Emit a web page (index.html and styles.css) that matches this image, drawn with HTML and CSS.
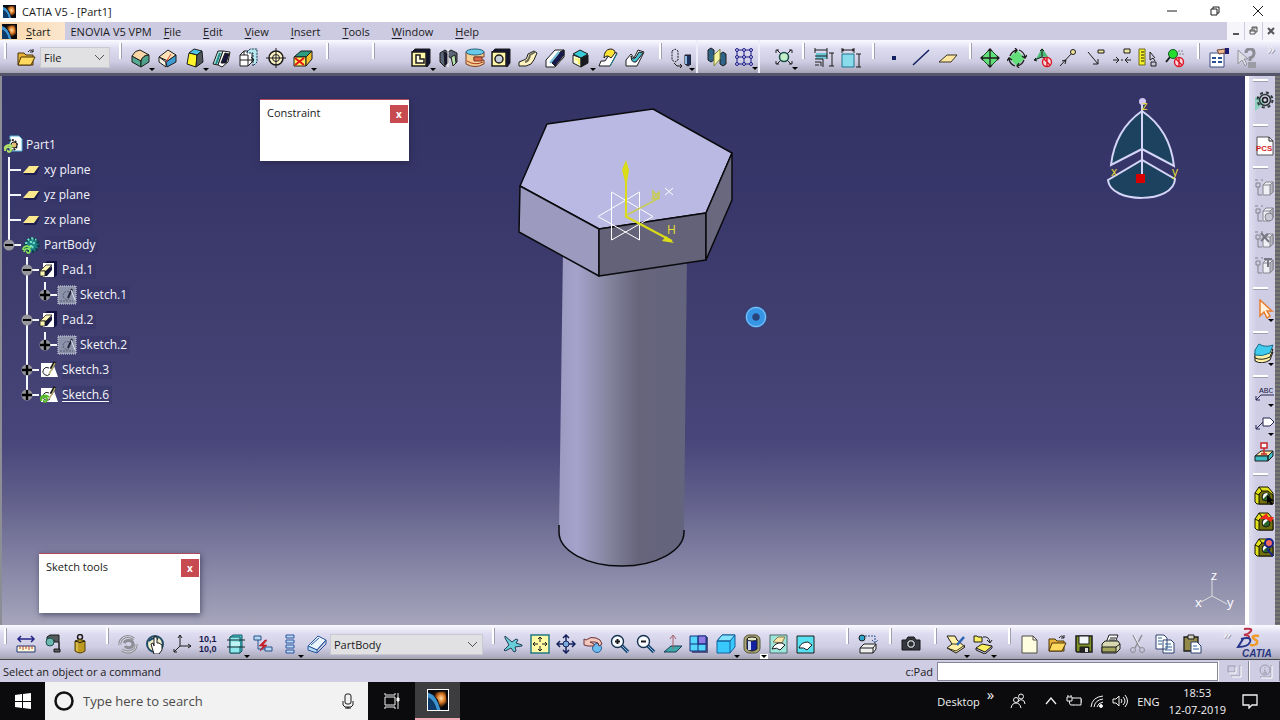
FILE: index.html
```html
<!DOCTYPE html>
<html lang="en">
<head>
<meta charset="utf-8">
<title>CATIA V5 - [Part1]</title>
<link rel="stylesheet" href="styles.css">
</head>
<body>
<svg class="defs" aria-hidden="true">
  <defs>
    <radialGradient id="flare" cx=".62" cy=".4" r=".5"><stop offset="0" stop-color="#ffe0a8"/><stop offset=".5" stop-color="#d97824"/><stop offset="1" stop-color="#1a0c05"/></radialGradient>
  </defs>
  <symbol id="app" viewBox="0 0 16 16"><path fill="#060810" stroke="none" d="M0 0h16v16H0z"/><path fill="url(#flare)" stroke="none" d="M3 2l11-1 1 9-5 5-2-7z"/><path fill="#3d93d0" stroke="none" d="M0 2q7 2 10 14H7Q5 8 0 6z"/><path fill="#0d3a68" stroke="none" d="M0 6q5 2 7 10H0z"/></symbol>
  <symbol id="plane" viewBox="0 0 20 20"><path fill="#1c1c50" stroke="none" d="M3 14L8 7h11l-4 8H3z"/><path fill="#fbe88c" stroke="none" d="M2 13l6-7h10l-5 7z"/></symbol>
  <symbol id="minus" viewBox="0 0 12 12"><circle cx="6" cy="6" r="5.5" fill="#96969c" stroke="none"/><path stroke="#000" stroke-width="2" d="M2 6h8"/></symbol>
  <symbol id="plus" viewBox="0 0 12 12"><circle cx="6" cy="6" r="5.5" fill="#96969c" stroke="none"/><path stroke="#000" stroke-width="2.4" d="M1 6h10M6 1v10"/></symbol>
  <symbol id="pad" viewBox="0 0 20 20"><path fill="#121245" stroke="none" d="M5 4l3-3h10v14l-3 3z"/><path fill="#fff" stroke="none" d="M4 3h11v14H4z"/><path fill="#15153b" stroke="none" d="M6 16v-5l7-5v4l-5 6z"/><path fill="#fbf3b0" stroke="#222" stroke-width=".8" d="M1 11l6-6h6l-6 6z"/><path fill="#fbf3b0" stroke="#222" stroke-width=".8" d="M1 11h5v5H1z"/></symbol>
  <symbol id="sk" viewBox="0 0 20 20"><path fill="#fff" stroke="none" d="M2 3h12l5 14H2z"/><path stroke="#222" d="M10 8a4 4 0 1 0 1 6"/><path stroke="#111" stroke-width="3" d="M16 2l-4 7"/><path stroke="#b7ad71" stroke-width="1.5" d="M16 3l-3 6-3 5"/></symbol>
  <symbol id="skg" viewBox="0 0 20 20"><rect x="1" y="1" width="18" height="18" fill="#8d92ab" stroke="#d7dae8" stroke-dasharray="1 1"/><path stroke="#555a70" stroke-dasharray="2 1" d="M3 16h13M12 7a4 4 0 1 0 0 7"/><path stroke="#232638" stroke-width="2" d="M15 4l-4 9"/><path stroke="#e1e4ef" d="M14 5l4 10"/></symbol>
  <symbol id="gear" viewBox="0 0 20 20"><circle cx="11" cy="10" r="6.5" fill="#1d7f82" stroke="#0d4046" stroke-width="3" stroke-dasharray="2 2"/><path stroke="#6fe0c8" stroke-width="2.2" stroke-dasharray="2 2" d="M5 9a6 6 0 0 1 10-4M7 14a6 6 0 0 0 5-9M10 6v8"/><path stroke="#83e35a" stroke-width="1.7" d="M3 17c1-5 6-4 6-1s-4 2-3 0M10 13c-4-4-8-1-8 2"/></symbol>
  <symbol id="part" viewBox="0 0 20 20"><path fill="#fff" stroke="#54b6d8" d="M7 1h9l3 3v12H7z"/><path stroke="#262626" stroke-width="2" stroke-dasharray="2 1" d="M6 6a5 5 0 1 1 2 9"/><circle cx="11" cy="10" r="3" fill="#e6bd78"/><path stroke="#aee06b" stroke-width="2" d="M2 16c0-6 7-4 6-1s-4 2-3 0M10 12c-4-4-9-1-8 2"/></symbol>
  <symbol id="box" viewBox="0 0 20 20"><path fill="#efeff5" stroke="#85858f" d="M9 7l3-3h7v10l-3 3H9z"/><path fill="#b5b5be" stroke="#85858f" d="M16 7l3-3v10l-3 3z"/><path stroke="#83838d" d="M9 7h7M2 5h4v4H2zM4 9v8h4M1 2h3M7 2h2"/></symbol>
  <symbol id="nut" viewBox="0 0 20 20"><path fill="#e1e11d" stroke="#141400" d="M1 17V8l4-6h9l5 6v11H3z"/><path fill="#70700f" stroke="#141400" d="M5 19V9l3-3h6l5 4v9z"/><path stroke="#141400" d="M5 2l3 4M1 8l4 2"/><circle cx="12" cy="12" r="4" fill="#256527"/><path fill="#fff" stroke="none" d="M9 14l5-5-1-1q-5 0-4 6z"/></symbol>
  <symbol id="folder" viewBox="0 0 20 20"><path fill="#e8b33b" stroke="#4b3507" d="M2 17V5h6l2 2h7v10z"/><path fill="#ffd95d" stroke="#4b3507" d="M2 17l3-8h14l-4 8z"/><path stroke="#222" d="M12 4q3-4 5 0m0-3v3h-3"/></symbol>
  <symbol id="no" viewBox="0 0 20 20"><circle cx="14" cy="14" r="4.5" fill="#f6d8e0" stroke="#dc1826" stroke-width="1.4"/><path stroke="#dc1826" stroke-width="1.4" d="M11 11l6 6M14 10v8"/></symbol>
  <symbol id="loupe" viewBox="0 0 20 20"><path stroke="#1c4770" stroke-width="3.5" d="M11 11l7 7"/><path stroke="#84b8e4" d="M11 11l7 7"/><circle cx="7.500" cy="7.500" r="6" fill="#f7fbff" stroke="#17324f" stroke-width="1.400"/></symbol>
</svg>

<header class="titlebar">
  <svg class="app-icon"><use href="#app"/></svg>
  <h1>CATIA V5 - [Part1]</h1>
  <div class="window-buttons">
    <button aria-label="Minimize"><svg class="i s10" viewBox="0 0 10 10"><path d="M0 5h10"/></svg></button>
    <button aria-label="Restore"><svg class="i s10" viewBox="0 0 10 10"><path d="M1 3h6v6H1zM3 3V1h6v6H7"/></svg></button>
    <button aria-label="Close"><svg class="i s10" viewBox="0 0 10 10"><path d="M0 0l10 10M10 0L0 10"/></svg></button>
  </div>
</header>

<nav class="menubar">
  <button class="start"><svg class="menu-app"><use href="#app"/></svg><span><u>S</u>tart</span></button>
  <button class="enovia">ENOVIA V5 VPM</button>
  <button><u>F</u>ile</button>
  <button><u>E</u>dit</button>
  <button><u>V</u>iew</button>
  <button><u>I</u>nsert</button>
  <button><u>T</u>ools</button>
  <button><u>W</u>indow</button>
  <button><u>H</u>elp</button>
  <div class="doc-buttons">
    <button aria-label="Minimize document"><svg class="i s10" viewBox="0 0 10 10"><path stroke-width="2" d="M2 8h6"/></svg></button>
    <button aria-label="Restore document"><svg class="i s10" viewBox="0 0 10 10"><path d="M1 4h5v4H1zM1 5h5M3 4V1h5v5H6M3 2h5"/></svg></button>
    <button aria-label="Close document"><svg class="i s10" viewBox="0 0 10 10"><path stroke-width="2" d="M1 2l6 6M7 2L1 8"/></svg></button>
  </div>
</nav>

<div class="toolbar top" role="toolbar" aria-label="Part design">
  <div class="group">
    <button aria-label="Open catalog"><svg class="i" viewBox="0 0 20 20"><use href="#folder"/></svg></button>
    <select class="combo" aria-label="Catalog"><option>File</option></select>
  </div>
  <div class="group">
    <button class="more" aria-label="Edge fillet"><svg class="i" viewBox="0 0 20 20"><path fill="#56a892" d="M1 8l9 5v6l-9-5z"/><path fill="#f8d5a5" d="M1 8q3-6 8-6l9 5q-6 0-8 6z"/><path fill="#4fa08a" d="M10 13q2-6 8-6v7l-8 5z"/></svg></button>
    <button aria-label="Chamfer"><svg class="i" viewBox="0 0 20 20"><path fill="#fce0b6" d="M1 9l9-7 8 5-8 6z"/><path fill="#f5efe0" d="M1 9l7 5v5l-7-5z"/><path fill="#3f9cd2" d="M8 14l10-7v7l-9 5z"/><path stroke="#e04838" d="M8 14l5-8"/></svg></button>
    <button class="more" aria-label="Draft angle"><svg class="i" viewBox="0 0 20 20"><path fill="#4ec3e6" d="M4 5l5-4 8 2-5 4z"/><path fill="#fff32a" d="M4 5l8 2-1 12-9-3z"/><path fill="#51565a" d="M12 7l5-4 1 11-7 5z"/></svg></button>
    <button aria-label="Shell"><svg class="i" viewBox="0 0 20 20"><path fill="#b9e5dc" d="M1 16L6 3h5L6 17z"/><path fill="#fff" d="M6 17L11 3l7 1-2 10-6 5z"/><path fill="#15153c" d="M9 15l4-10 4 1-3 9z"/><path stroke="#1b8a88" stroke-width="2" d="M4 16L8 5"/></svg></button>
    <button aria-label="Thickness"><svg class="i" viewBox="0 0 20 20"><path fill="#fff" d="M1 7l4-4h8v11l-4 4H1z"/><path fill="#b6e8ed" stroke="#17324c" stroke-dasharray="2 1" d="M8 4l3-3h7v13l-4 4V5H8z"/><path d="M1 7h8v11M5 3v4M1 12h14m-3-3l3 3-3 3"/></svg></button>
    <button aria-label="Thread"><svg class="i" viewBox="0 0 20 20"><circle cx="10" cy="10" r="7" fill="#fff6c8" stroke-width="1.500"/><circle cx="10" cy="10" r="3.500"/><path d="M10 0v20M0 10h20"/></svg></button>
    <button class="more" aria-label="Remove face"><svg class="i" viewBox="0 0 20 20"><path fill="#2c9c80" d="M1 9l7-6h11l-6 6z"/><path fill="#fff05a" d="M1 9h12v9H1z"/><path fill="#efbf2c" d="M13 9l6-6v8l-6 7z"/><path stroke="#e51717" stroke-width="2" d="M2 10l9 7M11 10l-9 7"/></svg></button>
  </div>
  <div class="group"></div>
  <div class="group long">
    <button class="more" aria-label="Pad"><svg class="i" viewBox="0 0 20 20"><path fill="#121232" d="M1 4l3-3h15v14l-3 4z"/><path fill="#fff6a8" stroke-width="1.500" d="M1 4h14v14H1z"/><path fill="#fffce0" stroke-width="1.500" d="M5 7h4v4h4v4H5z"/></svg></button>
    <button aria-label="Pocket"><svg class="i" viewBox="0 0 20 20"><path fill="#5a6577" d="M2 14V5l5-3 3 2 3-2 6 3v9l-3 3-2-6-4-3-3 4v7z"/><path fill="#161630" d="M6 4l4 2v9l-3 2z"/><path fill="#b7e2ad" d="M13 9l4-2 1 8-3 3z"/><path stroke="#fff" d="M10 1v18"/></svg></button>
    <button aria-label="Shaft"><svg class="i" viewBox="0 0 20 20"><path fill="#f6cf94" stroke="#7a3c28" d="M1 4v12q9 5 18 0v-4H9V9h10V4z"/><ellipse cx="10" cy="4" rx="9" ry="3" fill="#66cae8" stroke="#2a5f7c"/><path fill="#df674b" stroke="#7a3c28" d="M9 9h8v4H9z"/><path stroke="#b03820" d="M2 13q8 5 16 1"/></svg></button>
    <button aria-label="Hole"><svg class="i" viewBox="0 0 20 20"><path fill="#121232" d="M1 4l3-3h15v14l-3 4z"/><path fill="#fff6a8" stroke-width="1.500" d="M1 4h14v14H1z"/><circle cx="8" cy="11" r="4" fill="#c9cfda" stroke-width="1.500"/></svg></button>
    <button aria-label="Rib"><svg class="i" viewBox="0 0 20 20"><path fill="#fff4c0" d="M1 18v-4l5-2q3 0 4-6l6-3 3 2q-3 8-6 11l-5 2z"/><path stroke="#6b6b56" stroke-width="2" d="M7 14q4-1 5-7l5-3"/></svg></button>
    <button aria-label="Slot"><svg class="i" viewBox="0 0 20 20"><path fill="#fff" d="M1 17v-5L10 2h9v7l-9 10H1z"/><path fill="#161a4c" d="M6 14l9-10 4-2v5L10 18z"/><path stroke="#7dc3d8" stroke-width="2" d="M5 15l9-11"/></svg></button>
    <button class="more" aria-label="Stiffener"><svg class="i" viewBox="0 0 20 20"><path fill="#f8ffd8" d="M2 7l8 3v9l-8-4z"/><path fill="#171b20" d="M10 10l7-3v8l-7 4z"/><path fill="#36cbd6" d="M2 6l7-4 8 4-7 4z"/><path stroke="#fff06a" stroke-width="2" d="M4 11l4 1v4"/></svg></button>
    <button aria-label="Multi-sections solid"><svg class="i" viewBox="0 0 20 20"><path fill="#fff" d="M1 18l2-5h4l6-9 6 1-7 13z"/><path fill="#ffe436" d="M6 10q0-8 6-9 5 0 5 4l-4 5q-4-4-7 0z"/><path stroke="#1a858c" d="M12 18l7-12"/></svg></button>
    <button aria-label="Removed multi-sections"><svg class="i" viewBox="0 0 20 20"><path fill="#fff" d="M1 18v-6l5-6 3 4 4-8 6 2-7 14z"/><path fill="#45bfd4" d="M6 8q2 5 5 1l3-5 4 1-7 9q-5 1-5-6z"/></svg></button>
  </div>
  <div class="group">
    <button class="more" aria-label="Translation"><svg class="i" viewBox="0 0 20 20"><path stroke-dasharray="2 1" d="M1 3l3-2 3 2v9l-3 2-3-2z"/><path d="M3 15l3 3h5m-2-2l2 2-2 2"/><path fill="#1d315e" d="M14 7h6v9l-3 2-3-2z"/><path fill="#8fbce0" stroke="none" d="M14 8h2v8h-2z"/></svg></button>
  </div>
  <div class="group line">
    <button aria-label="Mirror"><svg class="i" viewBox="0 0 20 20"><path fill="#2d6488" d="M1 3l3-2 3 2v10l-3 2-3-2zM13 7l3-2 3 2v10l-3 2-3-2z"/><path fill="#f4f3a1" stroke="#7b8542" d="M7 8l6-6v10l-6 7z"/></svg></button>
    <button class="more" aria-label="Rectangular pattern"><svg class="i" viewBox="0 0 20 20"><path stroke="#1c1c86" d="M3 3h14v14H3zM3 10h14M10 3v14"/><g fill="#c8c8ef" stroke="#1c1c86"><circle cx="3" cy="3" r="1.500"/><circle cx="10" cy="3" r="1.500"/><circle cx="17" cy="3" r="1.500"/><circle cx="3" cy="10" r="1.500"/><circle cx="10" cy="10" r="1.500"/><circle cx="17" cy="10" r="1.500"/><circle cx="3" cy="17" r="1.500"/><circle cx="10" cy="17" r="1.500"/><circle cx="17" cy="17" r="1.500"/></g></svg></button>
  </div>
  <div class="group line">
    <button class="more" aria-label="Scaling"><svg class="i" viewBox="0 0 20 20"><path d="M3 3l14 14M17 3L3 17M2 6V3h3M15 3h3v3M2 14v3h3M15 17h3v-3"/><circle cx="10" cy="10" r="4.500" fill="#c5efc9" stroke="#184c49" stroke-width="1.500"/></svg></button>
  </div>
  <div class="group">
    <button aria-label="Constraints defined in dialog box"><svg class="i" viewBox="0 0 20 20"><path fill="#6bc5d5" stroke="none" d="M2 5h11v6H2z"/><path d="M1 2h12M1 0v5M13 0v8M18 5v13M15 5h5M15 18h5M1 8h12v3M1 11h8v8M1 14h6v4M1 17h4"/></svg></button>
    <button aria-label="Constraint"><svg class="i" viewBox="0 0 20 20"><path fill="#89dcec" stroke="#23748c" d="M1 6h12v13H1z"/><path d="M1 2h12M1 0v5M13 0v5M18 6v13M15 6h5M15 19h5M3 1L1 2l2 1M11 1l2 1-2 1"/></svg></button>
  </div>
  <div class="group">
    <button aria-label="Point"><svg class="i" viewBox="0 0 20 20"><path fill="#102061" stroke="none" d="M8 8h4v4H8z"/></svg></button>
    <button aria-label="Line"><svg class="i" viewBox="0 0 20 20"><path stroke="#102061" stroke-width="1.500" d="M2 17L18 2"/></svg></button>
    <button aria-label="Plane"><svg class="i" viewBox="0 0 20 20"><path fill="#ffe7a0" stroke="#3c3422" d="M1 14l8-7h10l-6 7z"/></svg></button>
  </div>
  <div class="group">
    <button aria-label="Manipulation"><svg class="i" viewBox="0 0 20 20"><path fill="#62df79" stroke="#174d28" d="M10 1l9 9-9 9-9-9z"/><path stroke-width="1.300" d="M10 1v18M1 10h18M8 3l2-2 2 2M8 17l2 2 2-2M3 8l-2 2 2 2M17 8l2 2-2 2"/></svg></button>
    <button aria-label="Rotate"><svg class="i" viewBox="0 0 20 20"><path fill="#62df79" stroke="none" d="M10 2l8 8-8 8-8-8z"/><path stroke-width="1.300" d="M3 8q2-5 7-6m-2-2l2 2-2 3M12 2q5 2 6 7m-3-1l3 2 2-3M17 12q-2 5-7 6m2 2l-2-2 2-3M8 18q-5-2-6-7m3 1l-3-2-2 3"/></svg></button>
    <button aria-label="Fix off"><svg class="i" viewBox="0 0 20 20"><path fill="#48bd79" stroke="none" d="M9 0l7 10-7-2-7 5z"/><path d="M9 1v8l-8 3m8-3l7 2M7 3l2-2 2 2M3 10l-2 2 3 1"/><use href="#no"/></svg></button>
    <button aria-label="Arrow to point"><svg class="i" viewBox="0 0 20 20"><path d="M1 18L13 5M3 13l4-1-1 4"/><circle cx="14" cy="4" r="2.500" fill="#efe39a"/></svg></button>
    <button aria-label="Arrow to box"><svg class="i" viewBox="0 0 20 20"><path d="M2 4l10 12m0-5v5H7"/><path fill="#eee79e" d="M12 2h6v3h-6z"/></svg></button>
    <button aria-label="Align"><svg class="i" viewBox="0 0 20 20"><path d="M1 12h6m-3-3l3 3-3 3M19 12h-6m3-3l-3 3 3 3M9 12h2"/><path fill="#eee79e" d="M12 1h6v4h-6z"/></svg></button>
    <button aria-label="Structure"><svg class="i" viewBox="0 0 20 20"><path fill="#f7f224" stroke="#6d6b1d" d="M1 1h6v16H1z"/><path d="M3 4h3M3 7h3M3 10h3M3 13h3M12 4v8l3-2 2 3M12 4l5 6M13 14h5v4h-5z"/></svg></button>
    <button aria-label="Search off"><svg class="i" viewBox="0 0 20 20"><path stroke-width="2" d="M5 9l-4 5"/><circle cx="8" cy="6" r="4.500" fill="#27dc2f" stroke="#155423"/><path stroke="#888" stroke-dasharray="2 1" d="M13 3h6M14 6h5"/><use href="#no"/></svg></button>
  </div>
  <div class="group last">
    <button aria-label="Properties"><svg class="i" viewBox="0 0 20 20"><path fill="#fff" stroke="#3b4d82" d="M1 5h14v14H1z"/><path stroke="#25528e" stroke-width="2" d="M3 10h4M9 10h4M3 14h4M9 14h4"/><path fill="#eab891" stroke="#6d4230" d="M8 2l8-1v4l-6 1z"/><path fill="#1e1c70" stroke="none" d="M16 0h4v6h-4z"/></svg></button>
    <button aria-label="What's this"><svg class="i" viewBox="0 0 20 20"><path fill="#dedee5" stroke="#92929b" d="M2 2v14l4-4 3 6 2-2-3-5h4z"/><path stroke="#8c8c95" stroke-width="3" d="M10 5q0-4 4-4t4 4-4 5v3"/><path fill="#9b9ba3" stroke="none" d="M12 14h8v6h-8z"/></svg></button>
    <span class="overflow">»</span>
  </div>
</div>

<main>
  <section class="viewport" aria-label="3D view">
    <svg class="scene" viewBox="0 76 1245 549" preserveAspectRatio="xMidYMid meet">
      <defs><linearGradient id="shank"><stop offset="0" stop-color="#9c9ac0"/><stop offset=".14" stop-color="#a5a3cc"/><stop offset=".38" stop-color="#86859f"/><stop offset=".62" stop-color="#66657c"/><stop offset="1" stop-color="#65647e"/></linearGradient></defs>
      <path fill="url(#shank)" d="M563 250L559 532A62.500 34 0 0 0 684 532L687 250z"/>
      <path class="edge" d="M559 525v7A62.500 34 0 0 0 684 532v-2"/>
      <path class="edge" fill="#bab9e4" d="M547 124L653 109 732 153 706 213 599 229 520 186z"/>
      <path class="edge" fill="#9c9bbf" d="M520 186L599 229V276L519 232z"/>
      <path class="edge" fill="#636279" d="M599 229L706 213V260L599 276z"/>
      <path class="edge" fill="#69687f" d="M706 213L732 153V200L706 260z"/>
      <path stroke="#fff" fill="none" d="M611.500 192V240L653 216.500zM639.500 192V240L598 216.500z"/>
      <path stroke="#c8cb55" fill="none" stroke-width="1.500" d="M625 216l34-18M652 190l7 8-8 1M653 192v6l6-6v6"/>
      <path stroke="#d9dc17" fill="none" stroke-width="2" d="M626 216V164M625 216L672 241"/>
      <path fill="#d9dc17" d="M626 160l3 10-2 12h-2l-3-12zM674 243l-12-2 4-5z"/>
      <path stroke="#fff" d="M665 188l8 7M673 188l-8 7"/>
      <text class="axis" x="667" y="234">H</text>
      <g class="compass"><path d="M1142 111Q1115 130 1111 165L1142 149 1174 166Q1170 130 1142 111M1108 180L1142 160 1175 179C1174 204 1110 204 1108 180zM1142 101V180"/></g>
      <circle cx="1142.500" cy="101.500" r="3.500" fill="#d3c8f4"/>
      <path fill="#d60000" d="M1136 174h9v9h-9z"/>
      <g class="axis"><text x="1142" y="110">z</text><text x="1111" y="176">x</text><text x="1172" y="176">y</text></g>
      <path stroke="#ddd" fill="none" d="M1212 578V596L1201 602M1212 596L1227 604"/>
      <g class="triad"><text x="1211" y="580">z</text><text x="1195" y="607">x</text><text x="1227" y="607">y</text></g>
      <circle cx="756" cy="317" r="7" fill="none" stroke="#3795e6" stroke-width="7"/>
      <circle cx="756" cy="317" r="9.500" fill="none" stroke="#8bc9f6" stroke-width="1"/>
      <circle cx="756" cy="317" r="3.500" fill="#27457a"/>
    </svg>

    <div class="tree">
      <div class="root"><svg class="i"><use href="#part"/></svg><span>Part1</span></div>
      <ul>
        <li class="leaf"><div class="node"><svg class="i"><use href="#plane"/></svg><span>xy plane</span></div></li>
        <li class="leaf"><div class="node"><svg class="i"><use href="#plane"/></svg><span>yz plane</span></div></li>
        <li class="leaf"><div class="node"><svg class="i"><use href="#plane"/></svg><span>zx plane</span></div></li>
        <li><div class="node"><button aria-label="Collapse PartBody"><svg><use href="#minus"/></svg></button><svg class="i"><use href="#gear"/></svg><span>PartBody</span></div>
          <ul>
            <li><div class="node"><button aria-label="Collapse Pad.1"><svg><use href="#minus"/></svg></button><svg class="i"><use href="#pad"/></svg><span>Pad.1</span></div>
              <ul><li><div class="node"><button aria-label="Expand Sketch.1"><svg><use href="#plus"/></svg></button><svg class="i"><use href="#skg"/></svg><span>Sketch.1</span></div></li></ul></li>
            <li><div class="node"><button aria-label="Collapse Pad.2"><svg><use href="#minus"/></svg></button><svg class="i"><use href="#pad"/></svg><span>Pad.2</span></div>
              <ul><li><div class="node"><button aria-label="Expand Sketch.2"><svg><use href="#plus"/></svg></button><svg class="i"><use href="#skg"/></svg><span>Sketch.2</span></div></li></ul></li>
            <li><div class="node"><button aria-label="Expand Sketch.3"><svg><use href="#plus"/></svg></button><svg class="i"><use href="#sk"/></svg><span>Sketch.3</span></div></li>
            <li><div class="node"><button aria-label="Expand Sketch.6"><svg><use href="#plus"/></svg></button><svg class="i" viewBox="0 0 20 20"><use href="#sk"/><path stroke="#58b82e" stroke-width="2" d="M2 16c0-6 7-4 6-1s-4 2-3 0M10 12c-4-3-9-1-8 2"/></svg><span class="current">Sketch.6</span></div></li>
          </ul></li>
      </ul>
    </div>

    <div class="float constraint"><h2>Constraint</h2><button aria-label="Close Constraint">x</button></div>
    <div class="float sketch-tools"><h2>Sketch tools</h2><button aria-label="Close Sketch tools">x</button></div>
  </section>

  <aside class="sidebar" aria-label="Workbench tools">
    <div class="vgroup"><button aria-label="Part design workbench"><svg class="i" viewBox="0 0 20 20"><path fill="#8ecfc0" stroke="none" d="M1 6v14L14 10z"/><circle cx="11" cy="9" r="5.500" stroke="#30383a" stroke-width="1.500"/><circle cx="11" cy="9" r="7.500" stroke="#30383a" stroke-width="2" stroke-dasharray="3 3"/><circle cx="11" cy="9" r="2.500" fill="#d5d5e4" stroke-width="1.500"/></svg></button></div>
    <div class="vgroup"><button aria-label="PCS"><svg class="i" viewBox="0 0 20 20"><path fill="#fff" stroke="#555" d="M3 1h12l4 4v14H3z"/><path d="M15 1v4h4"/><text class="pcs" x="2" y="15">PCS</text></svg></button></div>
    <div class="vgroup"><button aria-label="Assemble"><svg class="i"><use href="#box"/></svg></button><button aria-label="Add"><svg class="i" viewBox="0 0 20 20"><use href="#box"/><circle cx="15" cy="13" r="4" fill="#c8c8d4" stroke="#85858f"/></svg></button><button aria-label="Remove"><svg class="i" viewBox="0 0 20 20"><use href="#box"/><path stroke="#777783" stroke-width="2" d="M7 3l8 9M14 4l-7 7"/></svg></button><button aria-label="Intersect"><svg class="i" viewBox="0 0 20 20"><use href="#box"/><path stroke="#777783" stroke-width="2" d="M10 3h8M14 3v8"/></svg></button></div>
    <div class="vgroup"><button class="more" aria-label="Select"><svg class="i" viewBox="0 0 20 20"><path fill="#fff2dc" stroke="#e87c2c" stroke-width="1.500" d="M6 1v16l4-4 3 6 3-2-3-5h5z"/></svg></button></div>
    <div class="vgroup"><button class="more" aria-label="Sketcher"><svg class="i" viewBox="0 0 20 20"><path fill="#fff0a1" d="M1 13l4-5q5 5 14 1l-3 8q-8 5-15 1z"/><path fill="#fff0a1" d="M1 10l4-5q5 5 14 1l-3 8q-8 4-15 1z"/><path fill="#3fcbed" stroke="#1a6a88" d="M1 7l4-6q6 4 14 1l-3 8q-8 4-15 2z"/></svg></button></div>
    <div class="vgroup spaced"><button class="more" aria-label="Text with leader"><svg class="i" viewBox="0 0 20 20"><text class="abc" x="5" y="9">ABC</text><path stroke="#25254f" d="M20 11H7l-5 5m0-4v4h4"/></svg></button><button class="more" aria-label="Flag note"><svg class="i" viewBox="0 0 20 20"><path fill="#fff" stroke="#25254f" d="M9 5h7l4 4-4 4H9z"/><path stroke="#25254f" d="M9 9L2 16m0-4v4h4"/></svg></button><button aria-label="Datum"><svg class="i" viewBox="0 0 20 20"><path fill="#ffe5a3" d="M1 14l6-5h12l-5 5z"/><path fill="#3ebdc5" d="M1 14h13v5H1zM14 14l5-5v5l-5 5z"/><path fill="#fff" stroke="#c52727" stroke-width="1.500" d="M7 1h6v5H7zM10 6v6M7 12h6"/></svg></button></div>
    <div class="vgroup"><button aria-label="Apply material"><svg class="i" viewBox="0 0 20 20"><use href="#nut"/><path fill="#000" stroke="none" d="M13 10v9l2-2 2 3 2-1-2-3h3z"/></svg></button><button aria-label="Render"><svg class="i" viewBox="0 0 20 20"><use href="#nut"/><path fill="#f12c1c" stroke="none" d="M5 8l8-6 1 4h6l-3 5-5-3z"/></svg></button><button aria-label="Analyze"><svg class="i" viewBox="0 0 20 20"><use href="#nut"/><circle cx="15" cy="6" r="4" fill="#f36c61" stroke="#18228a" stroke-width="2"/><path stroke="#18228a" stroke-width="2" d="M13 12l6 7"/></svg></button></div>
  </aside>
  <div class="desk-edge"></div>
</main>

<div class="toolbar bottom" role="toolbar" aria-label="View and standard">
  <div class="group">
    <button aria-label="Measure between"><svg class="i" viewBox="0 0 20 20"><path stroke="#252589" stroke-width="1.500" d="M2 5h16M5 2L2 5l3 3M15 2l3 3-3 3"/><path fill="#fff8d7" stroke="#1f3478" d="M1 12h18v6H1z"/><path stroke="#b2442f" d="M4 12v3M7 12v4M10 12v3M13 12v4M16 12v3"/></svg></button>
    <button aria-label="Measure item"><svg class="i" viewBox="0 0 20 20"><path fill="#555b5c" d="M4 3l3-2h9v14h-5v3h6v-3h-1V8h-5V6H4z"/><circle cx="7" cy="8" r="4" fill="#6cb8b0" stroke="#1c504d"/></svg></button>
    <button aria-label="Measure inertia"><svg class="i" viewBox="0 0 20 20"><circle cx="10" cy="3" r="2.500" stroke-width="1.500"/><path fill="#bd9a20" stroke="#514108" d="M5 7q5-3 10 0v10q-5 4-10 0z"/><path stroke="#f4dd6f" d="M7 8v9"/><path d="M5 7q5 3 10 0"/></svg></button>
  </div>
  <div class="group">
    <button aria-label="Update all"><svg class="i" viewBox="0 0 20 20"><path stroke="#8d8d95" stroke-width="3" d="M16 5C9-1 1 5 2 11M4 16c7 5 15 0 14-6M6 9c2-4 9-3 9 1s-6 5-8 2"/><path stroke="#e0e0e7" d="M16 5C9-1 1 5 2 11M4 16c7 5 15 0 14-6"/></svg></button>
    <button aria-label="Manual update"><svg class="i" viewBox="0 0 20 20"><circle cx="10" cy="10" r="8" fill="#f0eec9" stroke="#224b65" stroke-width="2"/><path stroke="#18486c" stroke-width="2" d="M4 7q4-4 9-2"/><path fill="#fff" d="M6 10l2-1 1 3V3h3v6h2l3 2v5l-3 4H9z"/></svg></button>
    <button aria-label="Axis system"><svg class="i" viewBox="0 0 20 20"><path d="M8 1v11h11M8 12l-6 6M6 4l2-3 2 3M16 10l3 2-3 2M2 15v3h3"/></svg></button>
    <button aria-label="Mean dimensions"><svg class="i" viewBox="0 0 20 20"><text class="dim" x="0" y="8">10,1</text><text class="dim" x="0" y="18">10,0</text></svg></button>
    <button class="more" aria-label="Create datum"><svg class="i" viewBox="0 0 20 20"><path fill="#44cbd4" stroke="#195761" d="M4 3l3-2h9v16l-2 2H4z"/><path fill="#8ee8ec" stroke="#195761" d="M4 3h10v16H4z"/><path stroke="#162b2e" d="M1 6h18M1 13h18"/><path fill="#bff3f3" stroke="none" d="M5 8h9v4H5z"/></svg></button>
    <button aria-label="Only current body"><svg class="i" viewBox="0 0 20 20"><path fill="#b8d7f0" stroke="#24508b" d="M1 2h7v4H1zM12 13h7v4h-7z"/><path stroke="#24508b" d="M5 6v9h7"/><path fill="#d91f28" stroke="#921018" stroke-width=".5" d="M12 6L6 12h4l-3 5 7-6h-4l4-5z"/></svg></button>
    <button class="more" aria-label="Catalog browser"><svg class="i" viewBox="0 0 20 20"><path fill="#bcd9f4" stroke="#2d54a0" d="M6 1h8v3H6zM6 6h8v3H6zM6 11h8v3H6zM6 16h8v3H6z"/></svg></button>
    <button aria-label="Catalog"><svg class="i" viewBox="0 0 20 20"><path fill="#eaf5fd" stroke="#28549c" d="M1 12L11 2l8 4-9 10z"/><path fill="#b8dcf3" stroke="#28549c" d="M1 12v4l9 3v-3z"/><path stroke="#28549c" d="M10 16l9-10v4l-9 9M4 11l8-7"/></svg></button>
    <select class="combo" aria-label="Current body"><option>PartBody</option></select>
  </div>
  <div class="group view">
    <button aria-label="Fly mode"><svg class="i" viewBox="0 0 20 20"><path fill="#66cfd7" stroke="#263d57" d="M2 2l7 6 4-3 2 1-2 3 6 2v1l-7 1 1 4-2 1-3-4-6 3-1-1 5-5-4-7z"/></svg></button>
    <button aria-label="Fit all in"><svg class="i" viewBox="0 0 20 20"><path fill="#fff9a4" stroke="#237888" stroke-width="1.500" d="M1 1h18v18H1z"/><path d="M10 3v5M10 17v-5M3 10h5M17 10h-5M8 5l2-2 2 2M8 15l2 2 2-2M5 8l-2 2 2 2M15 8l2 2-2 2"/></svg></button>
    <button aria-label="Pan"><svg class="i" viewBox="0 0 20 20"><path stroke="#14235c" stroke-width="1.500" d="M10 1v18M1 10h18M7 4l3-3 3 3M7 16l3 3 3-3M4 7l-3 3 3 3M16 7l3 3-3 3"/><circle cx="10" cy="10" r="3" fill="#78a9db" stroke="#14235c"/></svg></button>
    <button aria-label="Rotate view"><svg class="i" viewBox="0 0 20 20"><circle cx="14" cy="14" r="4.500" fill="#6dbcf0" stroke="#23619b"/><path fill="#f3c8bd" stroke="#6c343a" d="M1 5l2 1q5-4 10-2 5 1 6 6l-3 2q0-4-4-4H7l4 2v2H5L1 11z"/></svg></button>
    <button aria-label="Zoom in"><svg class="i" viewBox="0 0 20 20"><use href="#loupe"/><path stroke-width="2" d="M5 7.500h5M7.500 5v5"/></svg></button>
    <button aria-label="Zoom out"><svg class="i" viewBox="0 0 20 20"><use href="#loupe"/><path stroke-width="2" d="M5 7.500h5"/></svg></button>
    <button aria-label="Normal view"><svg class="i" viewBox="0 0 20 20"><path fill="#3fa9ab" stroke="#193c52" d="M1 18l7-6h11l-6 6z"/><path stroke="#a46068" d="M10 15V2M7 5l3-4 3 4"/></svg></button>
    <button aria-label="Multi view"><svg class="i" viewBox="0 0 20 20"><path fill="#525580" stroke="none" d="M3 3h16v16H3z"/><path fill="#55d6fb" stroke="#173180" d="M1 2h16v15H1z"/><path fill="#8f7be1" stroke="#173180" d="M9 2h8v8H9z"/><path stroke="#173180" d="M9 2v15M1 10h16"/></svg></button>
    <button class="more" aria-label="Isometric view"><svg class="i" viewBox="0 0 20 20"><path fill="#38c8fb" stroke="#155e9d" d="M1 7l5-6h13v12l-5 6H1z"/><path fill="#84e3ff" stroke="#155e9d" d="M1 7l5-6h13l-5 6z"/><path stroke="#155e9d" d="M14 7v12M1 7h13"/></svg></button>
    <button class="more lit" aria-label="Shading"><svg class="i" viewBox="0 0 20 20"><rect x="2" y="1" width="16" height="18" rx="5" fill="#a9a674" stroke="#56573a"/><path fill="#1422a1" d="M5 5v10q5 4 10 0V5z"/><path fill="#cdd8f5" stroke="none" d="M6 7h3v9H6z"/><ellipse cx="10" cy="5" rx="5" ry="2" fill="#e3e6c6"/></svg></button>
    <button aria-label="Hide/show"><svg class="i" viewBox="0 0 20 20"><path fill="#9ee5dc" stroke="#4a6a68" d="M1 1h17v18H1z"/><path fill="#f6e3a9" stroke="#8a7a4a" d="M4 8l5-5h7l-3 6z"/><path fill="#fff" d="M3 15q3-7 10-6l3 2-5 5q-3-3-8-1z"/></svg></button>
    <button aria-label="Swap visible space"><svg class="i" viewBox="0 0 20 20"><path fill="#58e2f1" d="M1 2h17v17H1z"/><path fill="#fff" d="M3 14q2-6 9-6l4 3-5 5q-3-3-8-2z"/></svg></button>
  </div>
  <div class="group"><button aria-label="Draft analysis"><svg class="i" viewBox="0 0 20 20"><circle cx="4" cy="4" r="3" fill="#2ca5cb"/><path stroke="#24508b" stroke-dasharray="2 1" d="M7 2h10v6m-3-2l3 3 3-3"/><path fill="#eee" d="M2 14l4-4h12v5l-3 4H2zM2 14h13v5M15 14l3-4"/></svg></button></div>
  <div class="group"><button aria-label="Capture"><svg class="i" viewBox="0 0 20 20"><path fill="#35383f" stroke="#15171a" d="M1 6h4l2-3h6l2 3h4v10H1z"/><circle cx="10" cy="10" r="4.500" fill="#b5bac2"/><circle cx="10" cy="10" r="2" fill="#333"/></svg></button></div>
  <div class="group"><button class="more" aria-label="Instantiate from document"><svg class="i" viewBox="0 0 20 20"><path fill="#fff0a5" d="M1 2h8l2 4 8 7-9 6-9-5 5-4z"/><path stroke="#403c23" d="M1 14l9 3 9-6M6 10h7"/><path stroke="#2a62b4" stroke-width="2.500" d="M18 3l-7 8"/></svg></button><button class="more" aria-label="Power copy"><svg class="i" viewBox="0 0 20 20"><path fill="#faef5e" d="M1 2h3l1 1h4v5H1zM3 14l6-4 10 2-7 6z"/><path d="M3 14v2l9 4 7-6v-2M10 3q6-1 7 5m-3-2l3 3 2-3"/></svg></button></div>
  <div class="group">
    <button aria-label="New"><svg class="i" viewBox="0 0 20 20"><path fill="#fffde0" stroke="#4c4b46" d="M2 2h11l4 4v13H2z"/><path stroke="#4c4b46" d="M13 2v4h4"/></svg></button>
    <button aria-label="Open"><svg class="i" viewBox="0 0 20 20"><use href="#folder"/></svg></button>
    <button aria-label="Save"><svg class="i" viewBox="0 0 20 20"><path fill="#7c9224" stroke-width="1.500" d="M2 2h16v16H3l-1-1z"/><path fill="#f3f6f8" d="M5 2h10v8H5z"/><path fill="#222" d="M6 13h9v5H6z"/><path fill="#ddd" stroke="none" d="M11 14h3v4h-3z"/></svg></button>
    <button aria-label="Print"><svg class="i" viewBox="0 0 20 20"><path fill="#fff" d="M5 9l3-8h9l-3 8z"/><path fill="#d7d8b1" d="M1 10l3-3h13l2 3v5l-4 4H1z"/><path fill="#a3a65c" d="M1 13h14v5H1z"/><path d="M15 13l4-3M9 4h6M8 6h6"/></svg></button>
    <button aria-label="Cut"><svg class="i" viewBox="0 0 20 20"><path stroke="#8d8d96" stroke-width="1.500" d="M5 1l7 13M14 1L7 14"/><path stroke="#f0f0f5" d="M6 1l6 11"/><circle cx="5" cy="16" r="2.500" stroke="#8d8d96"/><circle cx="14" cy="16" r="2.500" stroke="#8d8d96"/></svg></button>
    <button aria-label="Copy"><svg class="i" viewBox="0 0 20 20"><path fill="#fff" stroke="#2c416d" d="M1 1h8l3 3v11H1zM8 6h8l3 3v10H8z"/><path stroke="#2c629b" d="M3 4h4M3 7h4M3 10h4M10 10h6M10 13h7M10 16h7"/></svg></button>
    <button aria-label="Paste"><svg class="i" viewBox="0 0 20 20"><path fill="#938a4a" stroke-width="1.300" d="M2 3h14v14H2z"/><path fill="#d6d4c4" d="M6 1h6v4H6z"/><path fill="#fff" stroke="#2c416d" d="M9 8h6l4 4v7H9z"/><path stroke="#2c629b" d="M11 12h4M11 15h6"/></svg></button>
    <span class="overflow">»</span>
    <svg class="brand" viewBox="0 0 42 34" role="img" aria-label="CATIA"><path stroke="#bf3146" stroke-width="2" d="M10 2q9-1 7 2-2 3-7 4 6 0 5 3"/><path stroke="#28358c" stroke-width="2" d="M7 12q11-3 9 3-2 5-12 5L9 12"/><path stroke="#f09a28" stroke-width="2.500" d="M25 9q-7-1-6 2l4 3q1 5-7 4"/><text x="8" y="30">CATIA</text></svg>
  </div>
</div>

<div class="statusbar">
  <span class="hint">Select an object or a command</span>
  <label for="power">c:Pad</label>
  <input id="power" type="text">
  <button aria-label="Dialog"><svg class="i s16" viewBox="0 0 16 16"><path stroke="#999aab" d="M2 3h7v6H2zM14 2v11H5"/><path stroke="#fff" d="M3 10h7V4M15 3v11H6"/></svg></button>
  <button aria-label="Information"><svg class="i s16" viewBox="0 0 16 16"><circle cx="8" cy="7" r="5" stroke="#999aab"/><path stroke="#999aab" d="M8 4v1M7 7h1v3M6 10h4M14 2v12H3"/><path stroke="#fff" d="M15 3v12H4"/></svg></button>
</div>

<footer class="taskbar">
  <button class="start-btn" aria-label="Start menu"><svg class="s16" viewBox="0 0 16 16"><path fill="#fff" d="M0 2l7-1v7H0zM8 1l8-1v8H8zM0 9h7v6l-7-1zM8 9h8v7l-8-1z"/></svg></button>
  <div class="search">
    <svg class="i" viewBox="0 0 20 20"><circle cx="10" cy="10" r="8.500" stroke="#111" stroke-width="2.500"/></svg>
    <input type="text" placeholder="Type here to search" aria-label="Type here to search">
    <svg class="i s16" viewBox="0 0 16 16"><rect x="5" y="1" width="6" height="10" rx="2"/><path d="M3 8v4l2 2h6l2-2V8M8 14v2M5 15h6"/></svg>
  </div>
  <button class="task" aria-label="Task view"><svg class="i w s16" viewBox="0 0 16 16"><path d="M1 4h10v8H1zM1 0v2h10V0M1 16v-2h10v2M14 0v16"/><path fill="#fff" d="M13 5h2v3h-2z"/></svg></button>
  <button class="task active" aria-label="CATIA V5"><svg class="task-app"><use href="#app"/></svg></button>
  <div class="tray">
    <span class="desk">Desktop</span><span class="chev">»</span>
    <button aria-label="People"><svg class="i w s16" viewBox="0 0 16 16"><circle cx="6" cy="7" r="2.500"/><circle cx="11" cy="3.500" r="2.500"/><path d="M1 15q1-5 5-5t5 5M8 9q2-4 6-1l1 3"/></svg></button>
    <button aria-label="Show hidden icons"><svg class="i w s16" viewBox="0 0 16 16"><path stroke-width="1.300" d="M3 11l5-6 5 6"/></svg></button>
    <button aria-label="Battery"><svg class="i w s16" viewBox="0 0 16 16"><path d="M6 5h9v7H7M15 7h1v3M1 4h5v4H1zM2 2v2M5 2v2M3.500 8v2q0 3 4 2"/></svg></button>
    <button aria-label="Network"><svg class="i w s16" viewBox="0 0 16 16"><path d="M2 14Q3 4 14 3M5 14q1-7 9-8M8 14q1-4 6-5"/><circle cx="12" cy="13" r="1.500" fill="#fff"/></svg></button>
    <button aria-label="Volume"><svg class="i w s16" viewBox="0 0 16 16"><path d="M1 6h3l3-3v10l-3-3H1zM9 6q2 2 0 4M11 4q4 4 0 8M13 2q5 6 0 12"/></svg></button>
    <span class="lang">ENG</span>
    <time class="clock" datetime="2019-07-12T18:53"><span>18:53</span><span>12-07-2019</span></time>
    <button class="notify" aria-label="Notifications"><svg class="i w s16" viewBox="0 0 16 16"><path stroke-width="1.300" d="M1 2h14v10h-5l-3 3v-3H1z"/></svg></button>
  </div>
</footer>
</body>
</html>
```
FILE: styles.css
```css
* { box-sizing: border-box; }
html, body { height: 100%; }
body {
  margin: 0;
  display: flex;
  flex-direction: column;
  overflow: hidden;
  font-family: "Open Sans", "Noto Sans", sans-serif;
  font-size: 11px;
  color: #1a1a1a;
  background: #cfcde4;
}
button, select, input { font: inherit; color: inherit; }
button { border: 0; padding: 0; background: none; }
h1, h2 { margin: 0; font-size: inherit; font-weight: 400; }
svg { display: block; flex: none; }
.defs { position: absolute; width: 0; height: 0; }
.i { width: 20px; height: 20px; fill: none; stroke: #1c1c1c; }
.s10 { width: 10px; height: 10px; }
.s16 { width: 16px; height: 16px; }
.w { stroke: #f2f2f2; }

.titlebar {
  flex: none;
  height: 22px;
  display: flex;
  align-items: center;
  gap: 6px;
  padding-left: 3px;
  background: #fff;
}
.app-icon { width: 13px; height: 13px; }
.window-buttons { margin-left: auto; display: flex; padding-right: 1px; }
.window-buttons button { width: 43px; height: 20px; display: grid; place-items: center; }

.menubar {
  flex: none;
  height: 18px;
  display: flex;
  align-items: stretch;
  background: #cdcbe2;
}
.menubar > button { padding: 0 11px; white-space: nowrap; line-height: 17px; }
.menubar > .start {
  display: flex;
  align-items: center;
  gap: 8px;
  padding: 0 14px 0 1px;
  background: linear-gradient(90deg, #f8d8ac, #fbe6cc);
}
.menubar > .enovia { padding: 0 1px 0 6px; }
.menubar u { text-underline-offset: 2px; }
.menu-app { width: 17px; height: 15px; }
.doc-buttons { margin-left: auto; display: flex; gap: 1px; }
.doc-buttons button { width: 17px; background: #f6f6fa; display: grid; place-items: center; }
.doc-buttons .i { stroke: #555; }

.toolbar {
  flex: none;
  display: grid;
  padding-left: 4px;
  background: linear-gradient(#fafaff 0, #dedcf0 25%, #cfcde3 65%, #b3b1c6 90%, #a3a2b0);
}
.toolbar.top {
  height: 36px;
  border-bottom: 3px solid #55556a;
  grid-template-columns: 115fr 207fr 46fr 287fr 37fr 62fr 44fr 70fr 97fr 228fr 83fr;
}
.toolbar.bottom {
  height: 35px;
  border-bottom: 1px solid #44444c;
  grid-template-columns: 102fr 386fr 354fr 43fr 45fr 74fr 272fr;
}
.group { display: flex; align-items: center; min-width: 0; padding-top: 2px; }
.group::before {
  content: "";
  flex: none;
  align-self: flex-start;
  width: 3px;
  height: 16px;
  margin: 1px 5px 0 0;
  background: linear-gradient(90deg, #fff 2px, #9f9fb0 2px);
}
.group.line { padding-top: 0; }
.group.line::before { align-self: stretch; width: 2px; height: auto; margin: 0 5px 0 0; background: #eeeefa; }
.group.line + .group.line::before { margin-right: 10px; }
.group button { position: relative; flex: 0 1 27px; height: 27px; min-width: 0; display: grid; place-items: center; }
.group.long { padding-right: 11px; }
.group.long::before { margin-right: 33px; }
.group:nth-child(10) { padding-right: 9px; }
.group.view { padding-right: 27px; }
.more { position: relative; }
.more::after {
  content: "";
  position: absolute;
  right: -1px;
  bottom: 0;
  border: 3px solid transparent;
  border-top-color: #000;
  border-bottom: 0;
}
.lit::after { box-shadow: 0 0 0 1px #fff; background: #fff; }
.overflow { color: #f4f4fb; font-size: 16px; text-shadow: 1px 1px 0 #9a9aac; padding-left: 8px; line-height: 12px; align-self: flex-start; }
.combo {
  appearance: none;
  flex: 1;
  min-width: 0;
  height: 21px;
  margin: 0 9px 0 1px;
  padding: 0 3px;
  border: 1px solid #c9c9d0;
  border-radius: 0;
  background:
    linear-gradient(45deg, transparent 47%, #555 47% 58%, transparent 58%) right 9px center / 5px 5px no-repeat,
    linear-gradient(-45deg, transparent 47%, #555 47% 58%, transparent 58%) right 5px center / 5px 5px no-repeat,
    #e1e1e3;
}
.toolbar.bottom .combo { margin-left: 0; }
.toolbar.bottom .overflow { padding-left: 18px; margin-right: 3px; }
.brand { width: 42px; height: 34px; fill: none; align-self: flex-start; }
.brand text { font: italic 700 10px "Liberation Sans", sans-serif; fill: #28357f; stroke: none; }
.dim { font: 700 9px "Liberation Sans", sans-serif; fill: #16164c; stroke: none; }
.pcs { font: 700 8px "Liberation Sans", sans-serif; fill: #d31f2b; stroke: none; }
.abc { font: 8px "Liberation Mono", monospace; fill: #20204a; stroke: none; }

main { flex: 1; min-height: 0; display: flex; }
.viewport {
  position: relative;
  flex: 1;
  min-width: 0;
  overflow: hidden;
  border-left: 2px solid #8d8d95;
  background: linear-gradient(#333365 0, #37366a 20%, #403e6e 43%, #47457a 66%, #5e5c88 76%, #8281a2 88%, #a6a5bc);
}
.scene { position: absolute; inset: 0 0 0 -2px; width: calc(100% + 2px); height: 100%; }
.edge { stroke: #0a0a0e; stroke-width: 1.5; stroke-linejoin: round; }
path.edge:not([fill]) { fill: none; }
.axis { font: 12px "Open Sans", sans-serif; fill: #e6df35; }
.triad { font: 13px "Open Sans", sans-serif; fill: #fff; }
.compass { fill: #1d425f; stroke: #d5d5f8; stroke-width: 2; }

.tree { position: relative; padding: 56px 0 0 1px; width: max-content; color: #f4f4fb; font-size: 12px; }
.tree ul { list-style: none; margin: 0; padding: 0; }
.tree ul ul { padding-left: 18px; }
.tree li { background: linear-gradient(#f4f4fb, #f4f4fb) 5px 0 / 2px 100% no-repeat; }
.tree li:last-child { background-size: 2px 13px; }
.root, .node { height: 25px; display: flex; align-items: center; gap: 3px; }
.node button { width: 12px; height: 12px; margin-right: 3px; }
.node button svg { width: 12px; height: 12px; fill: none; }
.node { background: linear-gradient(#f4f4fb, #f4f4fb) 6px 12px / 12px 2px no-repeat; }
.leaf .node { padding-left: 18px; }
.node span { background: #33326366; padding-right: 3px; line-height: 18px; }
.current { text-decoration: underline; text-underline-offset: 2px; }

.float {
  position: absolute;
  height: 62px;
  display: flex;
  justify-content: space-between;
  align-items: flex-start;
  padding: 5px 1px 0 7px;
  border-top: 1px solid #b04a5c;
  background: #fff;
  box-shadow: 1px 2px 6px #22223e99;
}
.float h2 { line-height: 16px; }
.float button { width: 18px; height: 18px; background: #c64a50; color: #fff; font-size: 10px; font-weight: 700; line-height: 16px; }
.constraint { left: 258px; top: 23px; width: 149px; }
.sketch-tools { left: 37px; bottom: 12px; width: 161px; height: 60px; }

.sidebar {
  flex: none;
  width: 30px;
  display: grid;
  grid-template-rows: 45fr 42fr 121fr 44fr 44fr 98fr 152fr;
  padding: 3px 0 0 4px;
  border-left: 4px solid #fff;
  background: linear-gradient(90deg, #dfdef0, #cfcde4 8px);
}
.vgroup { display: flex; flex-direction: column; min-height: 0; }
.vgroup::before { content: ""; flex: none; width: 15px; height: 3px; margin-bottom: 6px; background: linear-gradient(#fff 2px, #9f9fb0 2px); }
.vgroup button { width: 21px; height: 26px; flex: none; display: grid; place-items: center; }
.vgroup .more::after { right: 0; bottom: 0; }
.spaced { gap: 3px; }
.spaced::before { margin-bottom: 0; }
.desk-edge { flex: none; width: 5px; background: repeating-linear-gradient(#777a72 0 2px, #66626e 2px 4px); }

.statusbar { flex: none; height: 22px; display: flex; align-items: center; padding-left: 3px; background: #cfcde4; }
.hint { flex: 1; }
.statusbar label { margin-right: 4px; }
.statusbar input { flex: 0 1 281px; min-width: 0; height: 19px; border: 1px solid #85859a; background: #fff; }
.statusbar button { width: 31px; height: 20px; display: grid; place-items: center; border-right: 1px solid #85859a; border-left: 1px solid #fff; }

.taskbar { flex: none; height: 38px; display: flex; background: #0b0b0d; color: #f2f2f2; }
.start-btn { width: 45px; display: grid; place-items: center; }
.search { flex: 0 1 323px; min-width: 0; display: flex; align-items: center; gap: 9px; padding: 0 12px 0 9px; background: #f2f2f2; }
.search input { flex: 1; min-width: 0; border: 0; padding: 0; background: none; color: #333; font-size: 13px; }
.search input::placeholder { color: #4a4a4a; opacity: 1; }
.task { width: 45px; display: grid; place-items: center; }
.task.active { background: #3d3d3f; border-bottom: 2px solid #f0a9b4; }
.task-app { width: 22px; height: 22px; border: 1px solid #fff; }
.search + .task { width: 47px; }
.tray { margin-left: auto; display: flex; align-items: center; }
.tray button { width: 23px; display: grid; place-items: center; }
.chev { font-size: 15px; line-height: 15px; margin: 0 5px 14px 7px; }
.tray .chev + button { width: 38px; margin-right: 2px; }
.lang { margin: 0 9px 0 6px; }
.clock { display: flex; flex-direction: column; align-items: center; line-height: 17px; }
.tray .notify { width: 38px; margin: 0 11px 0 5px; }
```
